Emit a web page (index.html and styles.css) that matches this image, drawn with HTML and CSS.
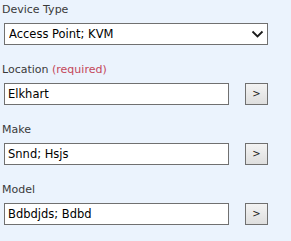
FILE: index.html
```html
<!DOCTYPE html>
<html>
<head>
<meta charset="utf-8">
<link rel="stylesheet" href="styles.css">
</head>
<body>
<form class="form">
  <div class="field">
    <label class="label">Device Type</label>
    <div class="select-wrap">
      <select class="select"><option>Access Point; KVM</option></select>
      <svg class="chevron" width="13" height="9" viewBox="0 0 13 9"><path d="M1.5 1.5 L6.5 6.5 L11.5 1.5" fill="none" stroke="#1a1a1a" stroke-width="1.8"/></svg>
    </div>
  </div>
  <div class="field">
    <label class="label">Location <span class="req">(required)</span></label>
    <div class="row">
      <input class="input" type="text" value="Elkhart">
      <button class="btn" type="button">&gt;</button>
    </div>
  </div>
  <div class="field">
    <label class="label">Make</label>
    <div class="row">
      <input class="input" type="text" value="Snnd; Hsjs">
      <button class="btn" type="button">&gt;</button>
    </div>
  </div>
  <div class="field">
    <label class="label">Model</label>
    <div class="row">
      <input class="input" type="text" value="Bdbdjds; Bdbd">
      <button class="btn" type="button">&gt;</button>
    </div>
  </div>
</form>
</body>
</html>
```

FILE: styles.css
```css
html, body {
  margin: 0;
  padding: 0;
  background: #ebf3fd;
}
body {
  font-family: "DejaVu Sans", Verdana, sans-serif;
}
.form {
  display: flex;
  flex-direction: column;
  gap: 17px;
  padding: 2px 0 0 4px;
}
.field {
  display: flex;
  flex-direction: column;
  gap: 5px;
}
.label {
  display: block;
  font-size: 11px;
  line-height: 16px;
  color: #3a3a3a;
  margin-left: -2px;
}
.req {
  color: #c4475a;
}
.select-wrap {
  position: relative;
  width: 264px;
  height: 22px;
}
.select {
  appearance: none;
  -webkit-appearance: none;
  box-sizing: border-box;
  width: 264px;
  height: 22px;
  margin: 0;
  border: 1px solid #707070;
  border-radius: 0;
  background: #fff;
  padding: 0 0 0 4px;
  font-family: "DejaVu Sans", Verdana, sans-serif;
  font-size: 11.5px;
  color: #000;
  outline: none;
}
.chevron {
  position: absolute;
  right: 4px;
  top: 7px;
}
.row {
  display: flex;
  align-items: center;
  gap: 16px;
}
.input {
  box-sizing: border-box;
  width: 225px;
  height: 22px;
  margin: 0;
  border: 1px solid #707070;
  border-radius: 0;
  background: #fff;
  padding: 0 0 0 3px;
  font-family: "DejaVu Sans", Verdana, sans-serif;
  font-size: 11.5px;
  color: #000;
  outline: none;
}
.btn {
  box-sizing: border-box;
  width: 23px;
  height: 22px;
  margin: 0;
  padding: 0;
  border: 1px solid #707070;
  border-radius: 0;
  background: linear-gradient(#f3f3f3, #dedede);
  font-family: "DejaVu Sans", Verdana, sans-serif;
  font-size: 10px;
  color: #222;
  line-height: 20px;
}
```
